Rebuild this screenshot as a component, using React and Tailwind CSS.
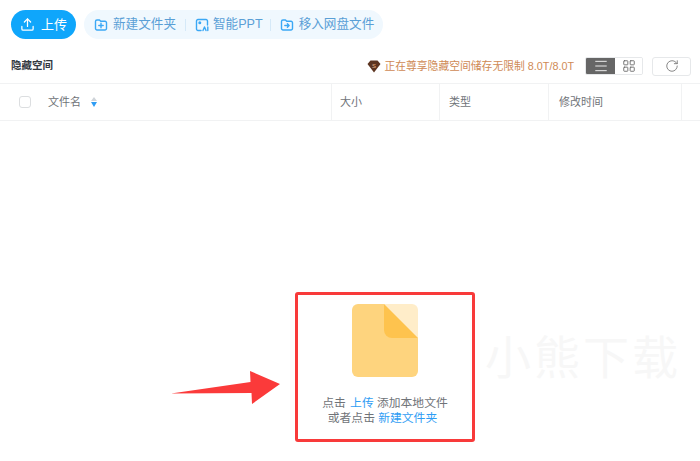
import React from 'react';
import { Upload, RotateCw, Menu, LayoutGrid } from 'lucide-react';

const FONT = '"Liberation Sans", "Noto Sans CJK SC", sans-serif';

function AddIcon({ arrow }) {
  return (
    <svg className="shrink-0" width="14" height="14" viewBox="0 0 14 14" fill="none" stroke="#3ba8f5" strokeWidth="1.4" strokeLinecap="round" strokeLinejoin="round">
      <path d="M1.500 3.500a1.500 1.500 0 0 1 1.500-1.500h2.500l1.200 1.200H11a1.500 1.500 0 0 1 1.500 1.500v5.800a1.500 1.500 0 0 1-1.500 1.500H3a1.500 1.500 0 0 1-1.500-1.500z" />
      {arrow ? <path d="M4.800 7.500h4.200M7.400 5.800l1.700 1.700-1.700 1.700" /> : <path d="M4.800 7.500h4.400M7 5.300v4.400" />}
    </svg>
  );
}

function PptIcon() {
  return (
    <svg className="shrink-0" width="14" height="14" viewBox="0 0 14 14" fill="none" stroke="#3ba8f5" strokeWidth="1.4" strokeLinecap="round" strokeLinejoin="round">
      <path d="M6 12.500H3a1.500 1.500 0 0 1-1.500-1.500V3A1.500 1.500 0 0 1 3 1.500h8A1.500 1.500 0 0 1 12.500 3v4" />
      <circle cx="4.800" cy="4.800" r="0.800" />
      <path d="M8 12.500l1.500-3.500 1.500 3.500M12.800 9v3.500" />
    </svg>
  );
}

function Gem() {
  return (
    <svg className="shrink-0" width="14" height="13" viewBox="0 0 14 13">
      <path d="M3.500 0.500h7L13.500 4 7 12.500 0.500 4z" fill="#5c3420" />
      <text x="7" y="7.500" textAnchor="middle" fontSize="6" fill="#e8b48c" fontFamily="Liberation Sans">S</text>
    </svg>
  );
}

function FileArt() {
  return (
    <svg width="66" height="73" viewBox="0 0 66 73">
      <path d="M32 0H6a6 6 0 0 0-6 6v61a6 6 0 0 0 6 6h54a6 6 0 0 0 6-6V34z" fill="#fed47e" />
      <path d="M32 0h28a6 6 0 0 1 6 6v28z" fill="#ffedc9" />
      <path d="M32 0l34 34H40a8 8 0 0 1-8-8z" fill="#fec34e" />
    </svg>
  );
}

function Arrow() {
  return (
    <svg width="110" height="34" viewBox="0 0 110 34">
      <path d="M0 22.500L79.500 11 79 0l30 13-28 20-.5-11z" fill="#fb3a3a" />
    </svg>
  );
}

function Sep() {
  return <span className="w-px h-3 bg-[#d5e9f8]" />;
}

export default function App() {
  return (
    <div className="relative w-[700px] h-[461px] overflow-hidden bg-white" style={{ fontFamily: FONT }}>
      {/* toolbar */}
      <div className="flex gap-2 pl-[11px] pt-[10px] h-[47px] items-start">
        <button className="flex items-center justify-center gap-[6px] w-[65px] h-[29px] rounded-full bg-[#0fa6fb] text-white text-[13px]">
          <Upload className="w-[15px] h-[15px]" strokeWidth={2} /> 上传
        </button>
        <div className="flex items-center h-[29px] w-[299px] pl-[10px] rounded-full bg-[#f0f8fe] text-[#5a9fd6] text-[12.600px] whitespace-nowrap">
          <AddIcon />
          <span className="ml-[5px]">新建文件夹</span>
          <span className="ml-[9px] mr-[9px] flex items-center"><Sep /></span>
          <PptIcon />
          <span className="ml-[4px]">智能PPT</span>
          <span className="ml-[7px] mr-[9px] flex items-center"><Sep /></span>
          <AddIcon arrow />
          <span className="ml-[5px]">移入网盘文件</span>
        </div>
      </div>

      {/* title row */}
      <div className="flex items-center h-[34px] pt-[2px] pl-[11px] pr-[9px] border-b border-[#f1f2f3] box-content">
        <span className="text-[10.500px] font-bold text-[#33383f]">隐藏空间</span>
        <div className="ml-auto flex items-center text-[10.800px] text-[#cf8a55] whitespace-nowrap">
          <Gem />
          <span className="ml-[3px]">正在尊享隐藏空间储存无限制 8.0T/8.0T</span>
        </div>
        <div className="ml-[11px] flex h-[18px] w-[58px] rounded-[2px] border border-[#e6e8ea] overflow-hidden">
          <span className="flex items-center justify-center w-[29px] bg-[#666666]">
            <Menu className="w-4 h-4 text-white" strokeWidth={1.3} />
          </span>
          <span className="flex items-center justify-center flex-1 bg-white">
            <LayoutGrid className="w-[14px] h-[14px] text-[#666666]" strokeWidth={1.5} />
          </span>
        </div>
        <button className="ml-[9px] flex items-center justify-center w-[39px] h-[19px] rounded-[3px] border border-[#e6e8ea]">
          <RotateCw className="w-[14px] h-[14px] text-[#777777]" strokeWidth={1.5} />
        </button>
      </div>

      {/* table header */}
      <div className="flex h-[37px] border-b border-[#f1f2f3] text-[11px] text-[#6f7378]">
        <div className="flex items-center w-[332px] border-r border-[#f1f2f3] pl-[19px]">
          <span className="w-3 h-3 rounded-[3px] border border-[#dcdee0]" />
          <span className="ml-[17px]">文件名</span>
          <span className="ml-[10px] flex flex-col gap-px">
            <span className="w-0 h-0 border-x-[3px] border-x-transparent border-b-[4px] border-b-[#cfd4d9]" />
            <span className="w-0 h-0 border-x-[3px] border-x-transparent border-t-[5px] border-t-[#2f9df4]" />
          </span>
        </div>
        <div className="flex items-center w-[108px] border-r border-[#f1f2f3] pl-2">大小</div>
        <div className="flex items-center w-[109px] border-r border-[#f1f2f3] pl-[9px]">类型</div>
        <div className="flex items-center w-[133px] border-r border-[#f1f2f3] pl-[10px]">修改时间</div>
      </div>

      {/* empty state */}
      <div className="flex flex-col items-center pt-[183px] pl-[70px]">
        <FileArt />
        <div className="mt-[19px] text-[11.800px] leading-[15px] text-center text-[#6f7378]">
          <div>点击 <span className="text-[#2f9df4] ml-px">上传</span> 添加本地文件</div>
          <div className="pr-[5px]">或者点击 <span className="text-[#2f9df4]">新建文件夹</span></div>
        </div>
      </div>

      {/* annotation + watermark, lie over the page */}
      <div className="absolute left-[295px] top-[292px] w-[180px] h-[150px] rounded-[3px] border-[3px] border-[#f83a3a]" />
      <div className="absolute left-[171px] top-[371px]"><Arrow /></div>
      <div className="absolute left-[485px] top-[331px] text-[46px] leading-[54px] tracking-[3px] text-[#f7f7f7]">小熊下载</div>
    </div>
  );
}
